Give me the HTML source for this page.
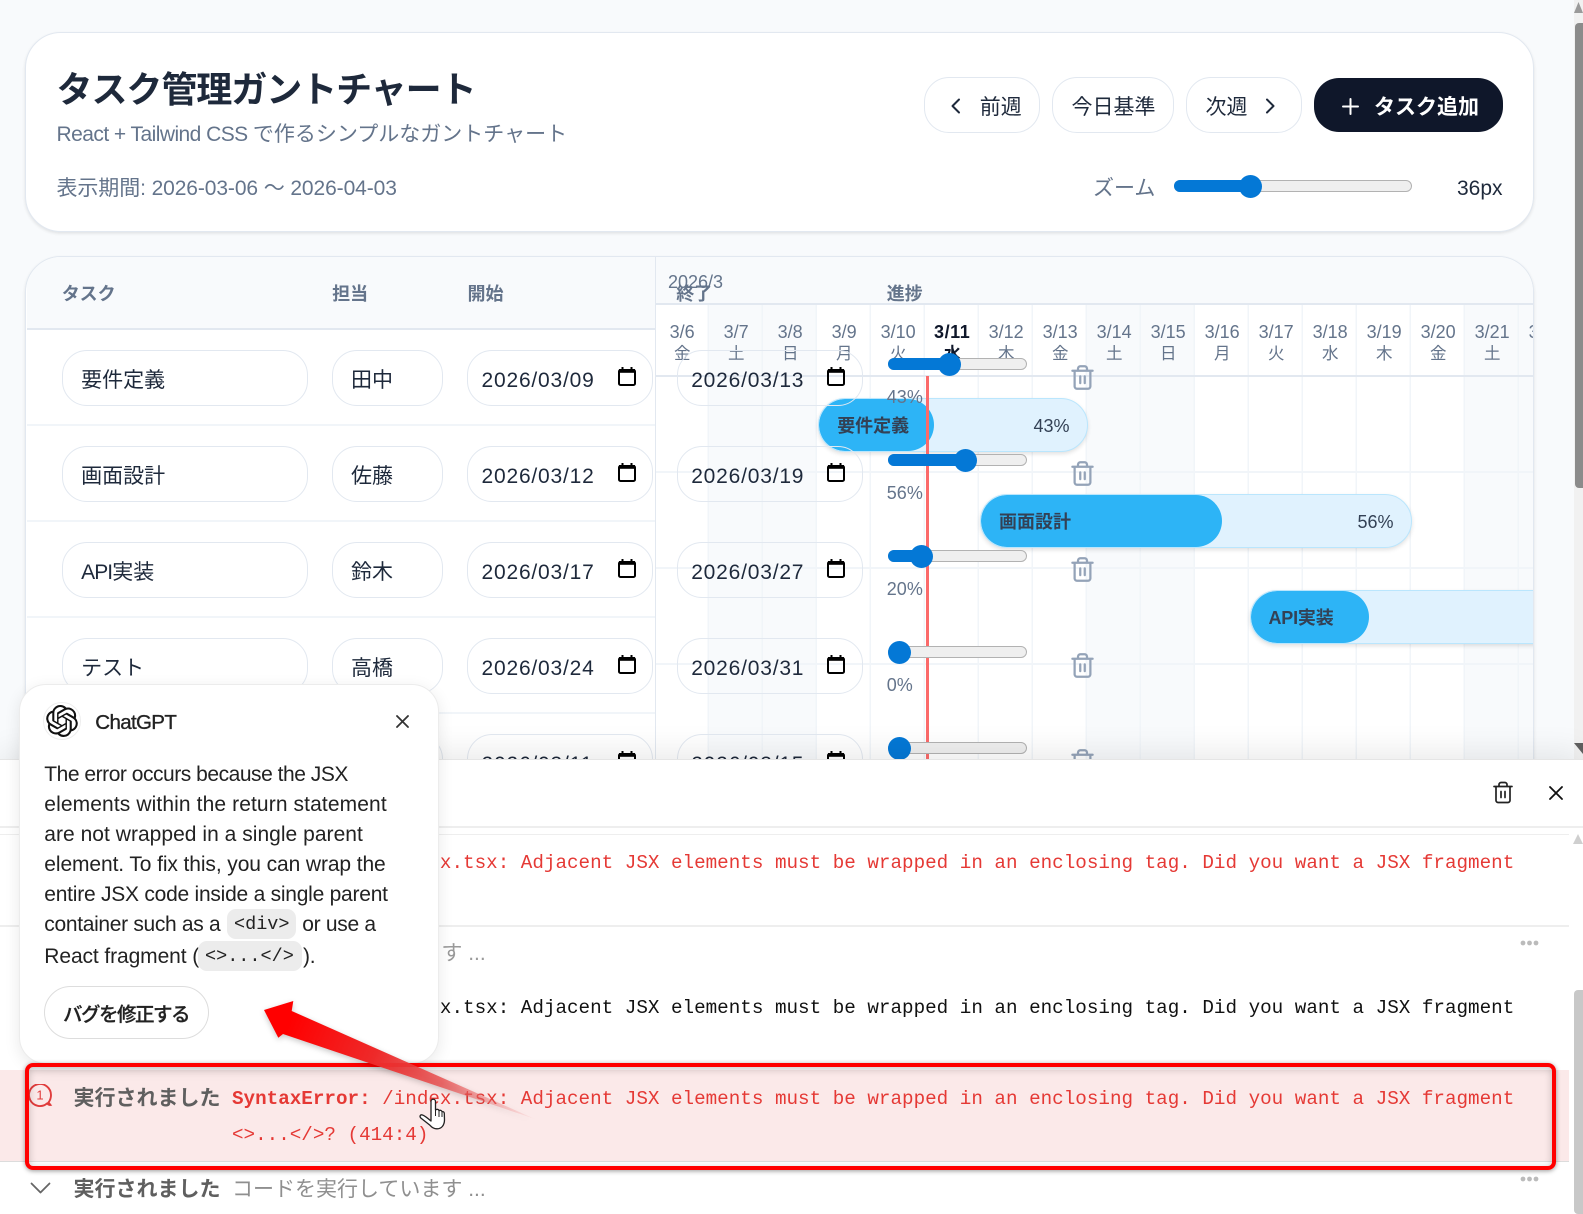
<!DOCTYPE html>
<html lang="ja"><head><meta charset="utf-8"><title>タスク管理ガントチャート</title>
<style>
html,body{margin:0;padding:0}
body{width:1583px;height:1214px;overflow:hidden;position:relative;background:#f8fafc;font-family:"Liberation Sans","Noto Sans CJK JP",sans-serif;color:#1e293b}
.t{position:absolute;white-space:nowrap;line-height:1}
.box{position:absolute;box-sizing:border-box}
.card{position:absolute;box-sizing:border-box;background:#fff;border:1.5px solid #e2e8f0;border-radius:36px;box-shadow:0 1.5px 3px rgba(0,0,0,.1)}
.btn{position:absolute;box-sizing:border-box;border:1.5px solid #e2e8f0;border-radius:25px;background:#fff;top:77px;height:56px}
.in{position:absolute;left:-26.5px;top:-257.5px;width:1583px;height:700px}
.r{position:absolute;left:0;width:1583px;height:96px}
.i{position:absolute;box-sizing:border-box;top:0;height:56px;border:1.5px solid #e2e8f0;border-radius:25px}
.v{font-size:21px;top:20px;color:#1e293b}
.d{font-size:21px;top:20px;color:#1e293b;letter-spacing:.8px}
.trk{position:absolute;box-sizing:border-box;left:888.3px;top:8.8px;width:139.4px;height:11.5px;background:#efefef;border:1.5px solid #b2b2b2;border-radius:6px}
.fil{position:absolute;left:888.3px;top:8.8px;height:11.5px;background:#0478d6;border-radius:6px 0 0 6px}
.th{position:absolute;top:3.1px;width:23px;height:23px;border-radius:50%;background:#0478d6}
.pc{font-size:18px;color:#64748b;top:38px;left:887.3px}
.cal{position:absolute;top:17.5px;width:18px;height:19px}
.tr{position:absolute;top:14px;left:1069.5px;width:27px;height:27px;fill:none;stroke:#94a3b8;stroke-width:2;stroke-linecap:round;stroke-linejoin:round}
.dh{position:absolute;top:0;width:54px;text-align:center;line-height:1;color:#64748b}
.dh b{display:block;font-weight:400;font-size:18px;margin-top:323px;color:#64748b}
.dh i{display:block;font-style:normal;font-size:16.5px;margin-top:5px;color:#64748b}
.bar{position:absolute;box-sizing:border-box;border:1.5px solid #bae6fd;background:#e0f2fe;border-radius:27px;overflow:hidden;box-shadow:0 2px 4px rgba(0,0,0,.12)}
.bf{position:absolute;left:0;top:0;bottom:0;background:#2db4f6;border-radius:27px}
.hd{font-size:18px;font-weight:700;color:#64748b}
.m{font-family:"Liberation Mono","Noto Sans CJK JP",monospace;font-size:19.25px}
.ok{font-size:21px;font-weight:700;color:#5f5f5f}
.p{font-size:21px;color:#222;left:44.3px}
.code{position:absolute;background:#ececec;border-radius:9px;height:30px}
</style></head><body>
<svg width="0" height="0" style="position:absolute"><defs>
<symbol id="cal" viewBox="0 0 18 19"><rect x="1" y="3" width="16" height="15" rx="1.5" fill="none" stroke="#000" stroke-width="2"/><rect x="1" y="2" width="16" height="3.800" fill="#000"/><rect x="3.500" y="0" width="2" height="3" fill="#000"/><rect x="12.500" y="0" width="2" height="3" fill="#000"/></symbol>
<symbol id="tr" viewBox="0 0 24 24"><path d="M3 6h18M19 6v14c0 1-1 2-2 2H7c-1 0-2-1-2-2V6M8 6V4c0-1 1-2 2-2h4c1 0 2 1 2 2v2M10 11v6M14 11v6"/></symbol>
</defs></svg>

<div class="card" style="left:25px;top:32px;width:1509px;height:200px"></div>
<div class="t" style="left:56.500px;top:72px;font-size:36px;font-weight:700;letter-spacing:-1.050px;color:#1e293b">タスク管理ガントチャート</div>
<div class="t" style="left:56.500px;top:124px;font-size:21px;color:#64748b"><span style="letter-spacing:-.55px">React + Tailwind CSS </span>で作るシンプルなガントチャート</div>
<div class="t" style="left:56.500px;top:178px;font-size:21px;letter-spacing:-.1px;color:#64748b">表示期間: 2026-03-06 〜 2026-04-03</div>

<div class="btn" style="left:924.3px;width:115.4px"></div>
<svg class="box" style="left:948px;top:97px" width="15" height="18" viewBox="0 0 15 18" fill="none" stroke="#1e293b" stroke-width="2" stroke-linecap="round" stroke-linejoin="round"><path d="M11 2.500 4.500 9l6.500 6.500"/></svg>
<div class="t" style="left:979.800px;top:97px;font-size:21px">前週</div>
<div class="btn" style="left:1052.200px;width:122px"></div>
<div class="t" style="left:1071.500px;top:97px;font-size:21px">今日基準</div>
<div class="btn" style="left:1186px;width:115.500px"></div>
<div class="t" style="left:1205.500px;top:97px;font-size:21px">次週</div>
<svg class="box" style="left:1263px;top:97px" width="15" height="18" viewBox="0 0 15 18" fill="none" stroke="#1e293b" stroke-width="2" stroke-linecap="round" stroke-linejoin="round"><path d="M4 2.500 10.500 9 4 15.500"/></svg>
<div class="box" style="left:1313.800px;top:78px;width:188.800px;height:54px;background:#0f172a;border-radius:25px"></div>
<svg class="box" style="left:1340.500px;top:96.500px" width="19" height="19" viewBox="0 0 19 19" fill="none" stroke="#fff" stroke-width="2" stroke-linecap="round"><path d="M9.500 2v15M2 9.500h15"/></svg>
<div class="t" style="left:1374px;top:97px;font-size:21px;font-weight:700;color:#fff">タスク追加</div>

<div class="t" style="left:1093px;top:178px;font-size:21px;color:#64748b">ズーム</div>
<div class="box" style="left:1174px;top:180px;width:238px;height:12px;background:#efefef;border:1.5px solid #b2b2b2;border-radius:6px"></div>
<div class="box" style="left:1174px;top:180px;width:76px;height:12px;background:#0478d6;border-radius:6px 0 0 6px"></div>
<div class="box" style="left:1239px;top:174.500px;width:23px;height:23px;background:#0478d6;border-radius:50%"></div>
<div class="t" style="left:1457px;top:178px;font-size:21px;color:#1e293b">36px</div>

<div class="card" style="left:25px;top:256px;width:1509px;height:700px;overflow:hidden"><div class="in">
<!-- gantt -->
<div class="box" style="left:655px;top:256px;width:900px;height:48px;background:#f8fafc"></div>
<div class="box" style="left:709.7px;top:304px;width:108px;height:500px;background:#f8fafc"></div>
<div class="box" style="left:1087.7px;top:304px;width:108px;height:500px;background:#f8fafc"></div>
<div class="box" style="left:1465.7px;top:304px;width:108px;height:500px;background:#f8fafc"></div>
<div class="box" style="left:655.7px;top:304px;width:900px;height:500px;background-image:repeating-linear-gradient(90deg,transparent 0 52.5px,#f1f5f9 52.5px 54px)"></div>
<div class="box" style="left:655px;top:303.500px;width:900px;height:1.500px;background:#e2e8f0"></div>
<div class="box" style="left:655px;top:375.500px;width:900px;height:1.500px;background:#e2e8f0"></div>
<div class="box" style="left:655px;top:471.500px;width:900px;height:1.500px;background:#f1f5f9"></div>
<div class="box" style="left:655px;top:567.500px;width:900px;height:1.500px;background:#f1f5f9"></div>
<div class="box" style="left:655px;top:663.500px;width:900px;height:1.500px;background:#f1f5f9"></div>
<div class="box" style="left:655px;top:759.500px;width:900px;height:1.500px;background:#f1f5f9"></div>
<div class="t" style="left:668.500px;top:273.500px;font-size:18px;color:#64748b">2026/3</div>

<div class="dh" style="left:655.7px"><b>3/6</b><i>金</i></div>
<div class="dh" style="left:709.7px"><b>3/7</b><i>土</i></div>
<div class="dh" style="left:763.7px"><b>3/8</b><i>日</i></div>
<div class="dh" style="left:817.7px"><b>3/9</b><i>月</i></div>
<div class="dh" style="left:871.7px"><b>3/10</b><i>火</i></div>
<div class="dh" style="left:925.7px"><b style="font-weight:700;color:#0f172a;letter-spacing:.6px">3/11</b><i style="font-weight:700;color:#0f172a">水</i></div>
<div class="dh" style="left:979.7px"><b>3/12</b><i>木</i></div>
<div class="dh" style="left:1033.7px"><b>3/13</b><i>金</i></div>
<div class="dh" style="left:1087.7px"><b>3/14</b><i>土</i></div>
<div class="dh" style="left:1141.7px"><b>3/15</b><i>日</i></div>
<div class="dh" style="left:1195.7px"><b>3/16</b><i>月</i></div>
<div class="dh" style="left:1249.7px"><b>3/17</b><i>火</i></div>
<div class="dh" style="left:1303.7px"><b>3/18</b><i>水</i></div>
<div class="dh" style="left:1357.7px"><b>3/19</b><i>木</i></div>
<div class="dh" style="left:1411.7px"><b>3/20</b><i>金</i></div>
<div class="dh" style="left:1465.7px"><b>3/21</b><i>土</i></div>
<div class="dh" style="left:1519.7px"><b>3/22</b><i>日</i></div>

<div class="bar" style="left:818px;top:398.300px;width:270.300px;height:54.400px"><div class="bf" style="width:115px"></div></div>
<div class="t" style="left:837.7px;top:417px;font-size:18px;font-weight:700;color:#334155">要件定義</div>
<div class="t" style="left:1034px;top:417px;font-size:18px;color:#334155">43%</div>
<div class="bar" style="left:980.300px;top:494.300px;width:432.200px;height:54.400px"><div class="bf" style="width:241px"></div></div>
<div class="t" style="left:999.500px;top:513px;font-size:18px;font-weight:700;color:#334155">画面設計</div>
<div class="t" style="left:1358px;top:513px;font-size:18px;color:#334155">56%</div>
<div class="bar" style="left:1250px;top:590.300px;width:590px;height:54.400px"><div class="bf" style="width:118.500px"></div></div>
<div class="t" style="left:1269px;top:609px;font-size:18px;font-weight:700;color:#334155;letter-spacing:-.2px">API実装</div>
<div class="box" style="left:926px;top:376.500px;width:3px;height:400px;background:#fb6a6a"></div>

<!-- table -->
<div class="box" style="left:27px;top:256px;width:628px;height:73px;background:#f8fafc"></div>
<div class="box" style="left:27px;top:328.500px;width:628px;height:1.500px;background:#e2e8f0"></div>
<div class="box" style="left:27px;top:424.500px;width:628px;height:1.500px;background:#f1f5f9"></div>
<div class="box" style="left:27px;top:520.500px;width:628px;height:1.500px;background:#f1f5f9"></div>
<div class="box" style="left:27px;top:616.500px;width:628px;height:1.500px;background:#f1f5f9"></div>
<div class="box" style="left:27px;top:712.500px;width:628px;height:1.500px;background:#f1f5f9"></div>
<div class="box" style="left:655px;top:256px;width:1.500px;height:520px;background:#e2e8f0"></div>
<div class="t hd" style="left:62.200px;top:285px">タスク</div>
<div class="t hd" style="left:332.600px;top:285px">担当</div>
<div class="t hd" style="left:468px;top:285px">開始</div>
<div class="t hd" style="left:676.700px;top:285px">終了</div>
<div class="t hd" style="left:887.300px;top:285px">進捗</div>

<div class="r" style="top:350px">
<div class="i" style="left:62.200px;width:246.400px"></div><div class="t v" style="left:81.600px">要件定義</div>
<div class="i" style="left:332.600px;width:110.700px"></div><div class="t v" style="left:351.500px">田中</div>
<div class="i" style="left:467.500px;width:186px"></div><div class="t d" style="left:482px">2026/03/09</div><svg class="cal" style="left:618px"><use href="#cal"/></svg>
<div class="i" style="left:677.300px;width:186px"></div><div class="t d" style="left:691.700px">2026/03/13</div><svg class="cal" style="left:827.800px"><use href="#cal"/></svg>
<div class="trk"></div><div class="fil" style="width:61px"></div><div class="th" style="left:938.300px"></div>
<div class="t pc">43%</div><svg class="tr"><use href="#tr"/></svg></div>

<div class="r" style="top:446px">
<div class="i" style="left:62.200px;width:246.400px"></div><div class="t v" style="left:81.600px">画面設計</div>
<div class="i" style="left:332.600px;width:110.700px"></div><div class="t v" style="left:351.500px">佐藤</div>
<div class="i" style="left:467.500px;width:186px"></div><div class="t d" style="left:482px">2026/03/12</div><svg class="cal" style="left:618px"><use href="#cal"/></svg>
<div class="i" style="left:677.300px;width:186px"></div><div class="t d" style="left:691.700px">2026/03/19</div><svg class="cal" style="left:827.800px"><use href="#cal"/></svg>
<div class="trk"></div><div class="fil" style="width:77px"></div><div class="th" style="left:954px"></div>
<div class="t pc">56%</div><svg class="tr"><use href="#tr"/></svg></div>

<div class="r" style="top:542px">
<div class="i" style="left:62.200px;width:246.400px"></div><div class="t v" style="left:81.600px"><span style="letter-spacing:-.9px">API</span>実装</div>
<div class="i" style="left:332.600px;width:110.700px"></div><div class="t v" style="left:351.500px">鈴木</div>
<div class="i" style="left:467.500px;width:186px"></div><div class="t d" style="left:482px">2026/03/17</div><svg class="cal" style="left:618px"><use href="#cal"/></svg>
<div class="i" style="left:677.300px;width:186px"></div><div class="t d" style="left:691.700px">2026/03/27</div><svg class="cal" style="left:827.800px"><use href="#cal"/></svg>
<div class="trk"></div><div class="fil" style="width:34px"></div><div class="th" style="left:910.300px"></div>
<div class="t pc">20%</div><svg class="tr"><use href="#tr"/></svg></div>

<div class="r" style="top:638px">
<div class="i" style="left:62.200px;width:246.400px"></div><div class="t v" style="left:81.600px">テスト</div>
<div class="i" style="left:332.600px;width:110.700px"></div><div class="t v" style="left:351.500px">高橋</div>
<div class="i" style="left:467.500px;width:186px"></div><div class="t d" style="left:482px">2026/03/24</div><svg class="cal" style="left:618px"><use href="#cal"/></svg>
<div class="i" style="left:677.300px;width:186px"></div><div class="t d" style="left:691.700px">2026/03/31</div><svg class="cal" style="left:827.800px"><use href="#cal"/></svg>
<div class="trk"></div><div class="th" style="left:888.300px"></div>
<div class="t pc">0%</div><svg class="tr"><use href="#tr"/></svg></div>

<div class="r" style="top:734px">
<div class="i" style="left:332.600px;width:110.700px"></div>
<div class="i" style="left:467.500px;width:186px"></div><div class="t d" style="left:482px">2026/03/11</div><svg class="cal" style="left:618px"><use href="#cal"/></svg>
<div class="i" style="left:677.300px;width:186px"></div><div class="t d" style="left:691.700px">2026/03/15</div><svg class="cal" style="left:827.800px"><use href="#cal"/></svg>
<div class="trk"></div><div class="th" style="left:888.300px"></div>
<svg class="tr"><use href="#tr"/></svg></div>
</div></div>

<!-- page scrollbar -->
<div class="box" style="left:1574px;top:0;width:9px;height:760px;background:#f1f1f1"></div>
<div class="box" style="left:1575px;top:23px;width:8px;height:465px;background:#8b8b8b;border-radius:4px 0 0 4px"></div>
<svg class="box" style="left:1574px;top:2px" width="9" height="11"><path d="M4.500 0 9 11H0z" fill="#9a9a9a"/></svg>
<svg class="box" style="left:1574px;top:743px" width="9" height="11"><path d="M0 0h9v11z" fill="#606060"/></svg>

<!-- panel -->
<div class="box" style="left:0;top:759px;width:1583px;height:455px;background:#fff;border-top:1.5px solid #e5e5e5;box-shadow:0 -6px 30px rgba(0,0,0,.09)"></div>
<svg class="box" style="left:1491px;top:780px;fill:none;stroke:#222;stroke-width:1.700;stroke-linecap:round;stroke-linejoin:round" width="24" height="25" viewBox="0 0 24 24"><path d="M3 6h18M19 6v14c0 1-1 2-2 2H7c-1 0-2-1-2-2V6M8 6V4c0-1 1-2 2-2h4c1 0 2 1 2 2v2M10 11v6M14 11v6"/></svg>
<svg class="box" style="left:1549px;top:786px" width="14" height="14" viewBox="0 0 14 14" fill="none" stroke="#111" stroke-width="1.800" stroke-linecap="round"><path d="M1 1l12 12M13 1 1 13"/></svg>
<div class="box" style="left:0;top:826px;width:1583px;height:1.500px;background:#eee"></div>
<div class="box" style="left:0;top:833.500px;width:1569px;height:1.500px;background:#eee"></div>
<svg class="box" style="left:1573px;top:834px" width="10" height="10"><path d="M5 0 10 10H0z" fill="#cfcfcf"/></svg>
<div class="box" style="left:1574px;top:989.500px;width:9px;height:224.500px;background:#c8c8c8;border-radius:4px 0 0 4px"></div>
<div class="t m" style="left:232px;top:854px;color:#e53935"><b>SyntaxError:</b> /index.tsx: Adjacent JSX elements must be wrapped in an enclosing tag. Did you want a JSX fragment</div>
<div class="box" style="left:0;top:925px;width:1569px;height:1.500px;background:#eee"></div>
<div class="t" style="left:232px;top:943px;font-size:21px;color:#9a9a9a">コードを実行しています ...</div>
<svg class="box" style="left:1520px;top:940px" width="19" height="6"><circle cx="3" cy="3" r="2.400" fill="#bbb"/><circle cx="9.500" cy="3" r="2.400" fill="#bbb"/><circle cx="16" cy="3" r="2.400" fill="#bbb"/></svg>
<div class="t m" style="left:232px;top:999px;color:#111"><b>SyntaxError:</b> /index.tsx: Adjacent JSX elements must be wrapped in an enclosing tag. Did you want a JSX fragment</div>

<div class="box" style="left:0;top:1070px;width:1569px;height:92px;background:#fbe9e9;border-bottom:1.500px solid #dcdcdc"></div>
<svg class="box" style="left:28px;top:1084px" width="25" height="23" viewBox="0 0 25 23" fill="none" stroke="#e03c3c" stroke-width="1.900"><path d="M19 19.500A11 11 0 1 1 23 11c0 3-1 5.500-2.500 7.500l2 2.500c-1.500.3-2.500-.5-3.500-1.500z"/><text x="12" y="15.500" font-size="13" text-anchor="middle" fill="#e03c3c" stroke="none" font-family="Liberation Sans">1</text></svg>
<div class="t ok" style="left:73.500px;top:1088px">実行されました</div>
<div class="t m" style="left:232px;top:1090px;color:#e53935"><b>SyntaxError:</b> /index.tsx: Adjacent JSX elements must be wrapped in an enclosing tag. Did you want a JSX fragment</div>
<div class="t m" style="left:232px;top:1125.500px;color:#e53935">&lt;&gt;...&lt;/&gt;? (414:4)</div>

<svg class="box" style="left:30px;top:1182px" width="21" height="12" viewBox="0 0 21 12" fill="none" stroke="#666" stroke-width="1.800" stroke-linecap="round" stroke-linejoin="round"><path d="M1.500 1.500 10.500 10.500 19.500 1.500"/></svg>
<div class="t ok" style="left:73.500px;top:1178.500px">実行されました</div>
<div class="t" style="left:232px;top:1178.500px;font-size:21px;color:#8f8f8f">コードを実行しています ...</div>
<svg class="box" style="left:1520px;top:1176px" width="19" height="6"><circle cx="3" cy="3" r="2.400" fill="#bbb"/><circle cx="9.500" cy="3" r="2.400" fill="#bbb"/><circle cx="16" cy="3" r="2.400" fill="#bbb"/></svg>

<!-- popup -->
<div class="box" style="left:19.300px;top:684.300px;width:419.700px;height:379.500px;background:#fff;border:1.500px solid #ececec;border-radius:27px;box-shadow:0 4px 16px rgba(0,0,0,.09)"></div>
<div class="box" style="left:43.300px;top:702.300px;width:37.500px;height:37.500px;border:1.500px solid #eee;border-radius:50%"></div>
<svg class="box" style="left:46px;top:705px" width="32" height="32" viewBox="0 0 24 24"><path fill="#111" d="M22.2819 9.8211a5.9847 5.9847 0 0 0-.5157-4.9108 6.0462 6.0462 0 0 0-6.5098-2.9A6.0651 6.0651 0 0 0 4.9807 4.1818a5.9847 5.9847 0 0 0-3.9977 2.9 6.0462 6.0462 0 0 0 .7427 7.0966 5.98 5.98 0 0 0 .511 4.9107 6.051 6.051 0 0 0 6.5146 2.9001A5.9847 5.9847 0 0 0 13.2599 24a6.0557 6.0557 0 0 0 5.7718-4.2058 5.9894 5.9894 0 0 0 3.9977-2.9001 6.0557 6.0557 0 0 0-.7475-7.0729zm-9.022 12.6081a4.4755 4.4755 0 0 1-2.8764-1.0408l.1419-.0804 4.7783-2.7582a.7948.7948 0 0 0 .3927-.6813v-6.7369l2.02 1.1686a.071.071 0 0 1 .038.052v5.5826a4.504 4.504 0 0 1-4.4945 4.4944zm-9.6607-4.1254a4.4708 4.4708 0 0 1-.5346-3.0137l.142.0852 4.783 2.7582a.7712.7712 0 0 0 .7806 0l5.8428-3.3685v2.3324a.0804.0804 0 0 1-.0332.0615L9.74 19.9502a4.4992 4.4992 0 0 1-6.1408-1.6464zM2.3408 7.8956a4.485 4.485 0 0 1 2.3655-1.9728V11.6a.7664.7664 0 0 0 .3879.6765l5.8144 3.3543-2.0201 1.1685a.0757.0757 0 0 1-.071 0l-4.8303-2.7865A4.504 4.504 0 0 1 2.3408 7.872zm16.5963 3.8558L13.1038 8.364 15.1192 7.2a.0757.0757 0 0 1 .071 0l4.8303 2.7913a4.4944 4.4944 0 0 1-.6765 8.1042v-5.6772a.79.79 0 0 0-.407-.667zm2.0107-3.0231l-.142-.0852-4.7735-2.7818a.7759.7759 0 0 0-.7854 0L9.409 9.2297V6.8974a.0662.0662 0 0 1 .0284-.0615l4.8303-2.7866a4.4992 4.4992 0 0 1 6.6802 4.66zM8.3065 12.863l-2.02-1.1638a.0804.0804 0 0 1-.038-.0567V6.0742a4.4992 4.4992 0 0 1 7.3757-3.4537l-.142.0805L8.704 5.459a.7948.7948 0 0 0-.3927.6813zm1.0976-2.3654l2.602-1.4998 2.6069 1.4998v2.9994l-2.5974 1.4997-2.6067-1.4997Z"/></svg>
<div class="t" style="left:95.300px;top:713px;font-size:20.500px;letter-spacing:-.65px;-webkit-text-stroke:.35px #222;color:#222">ChatGPT</div>
<svg class="box" style="left:395.500px;top:714.500px" width="13" height="13" viewBox="0 0 13 13" fill="none" stroke="#333" stroke-width="1.800" stroke-linecap="round"><path d="M1 1l11 11M12 1 1 12"/></svg>
<div class="t p" style="top:764px;letter-spacing:-.47px">The error occurs because the JSX</div>
<div class="t p" style="top:794px;letter-spacing:.11px">elements within the return statement</div>
<div class="t p" style="top:824px;letter-spacing:.03px">are not wrapped in a single parent</div>
<div class="t p" style="top:854px;letter-spacing:-.1px">element. To fix this, you can wrap the</div>
<div class="t p" style="top:884px;letter-spacing:-.24px">entire JSX code inside a single parent</div>
<div class="t p" style="top:914px;letter-spacing:-.32px">container such as a</div>
<div class="code" style="left:227px;top:909px;width:69px"></div>
<div class="t" style="left:234px;top:916px;font-family:'Liberation Mono',monospace;font-size:18.500px;color:#222">&lt;div&gt;</div>
<div class="t p" style="left:302.300px;top:914px;letter-spacing:-.3px">or use a</div>
<div class="t p" style="top:945.500px;letter-spacing:-.1px">React fragment (</div>
<div class="code" style="left:198.300px;top:941px;width:103.400px"></div>
<div class="t" style="left:205px;top:948px;font-family:'Liberation Mono',monospace;font-size:18.500px;color:#222">&lt;&gt;...&lt;/&gt;</div>
<div class="t p" style="left:303px;top:945.500px;letter-spacing:-.3px">).</div>
<div class="box" style="left:44.300px;top:986px;width:164.400px;height:53.300px;border:1.500px solid #ddd;border-radius:27px;background:#fff"></div>
<div class="t" style="left:63px;top:1006px;font-size:19.500px;font-weight:500;letter-spacing:-1.500px;-webkit-text-stroke:.25px #222;color:#222">バグを修正する</div>

<!-- annotations -->
<div class="box" style="left:24.500px;top:1063.300px;width:1531.200px;height:106.700px;border:4.200px solid #f00;border-radius:8px;box-shadow:0 1px 5px rgba(0,0,0,.4),inset 0 2px 8px rgba(0,0,0,.22)"></div>
<svg class="box" style="left:250px;top:990px;filter:drop-shadow(0 2px 3px rgba(0,0,0,.22))" width="300" height="140" viewBox="250 990 300 140"><defs><linearGradient id="ag" gradientUnits="userSpaceOnUse" x1="290" y1="1020" x2="535" y2="1119"><stop offset="0" stop-color="#f00"/><stop offset=".35" stop-color="#ee2a2a"/><stop offset=".62" stop-color="#e84a4a" stop-opacity=".8"/><stop offset=".85" stop-color="#ee7070" stop-opacity=".4"/><stop offset="1" stop-color="#f08080" stop-opacity=".05"/></linearGradient></defs><path d="M264 1010 293.300 1001 291.700 1011 535 1119 283 1034 278.300 1037.700z" fill="url(#ag)"/></svg>
<svg class="box" style="left:418px;top:1098px" width="28" height="33" viewBox="0 0 28 33"><path d="M13 3.500c0-3 4.500-3 4.500 0V12c1.200-1.200 3.300-.8 3.500.8 1-.9 2.800-.5 3 1 .9-.5 2.200 0 2.300 1.500l.2 6.500c0 5.500-3 9-7.500 9-3 0-5-1.200-7-3.500L2.800 20c-1.600-1.600-.4-3.800 1.700-3 2 .7 5 3 8.500 6z" fill="#fff" stroke="#222" stroke-width="1.300" stroke-linejoin="round"/><path d="M17.500 12v6M21 13v6M24 14v5" fill="none" stroke="#222" stroke-width="1"/></svg>
</body></html>
